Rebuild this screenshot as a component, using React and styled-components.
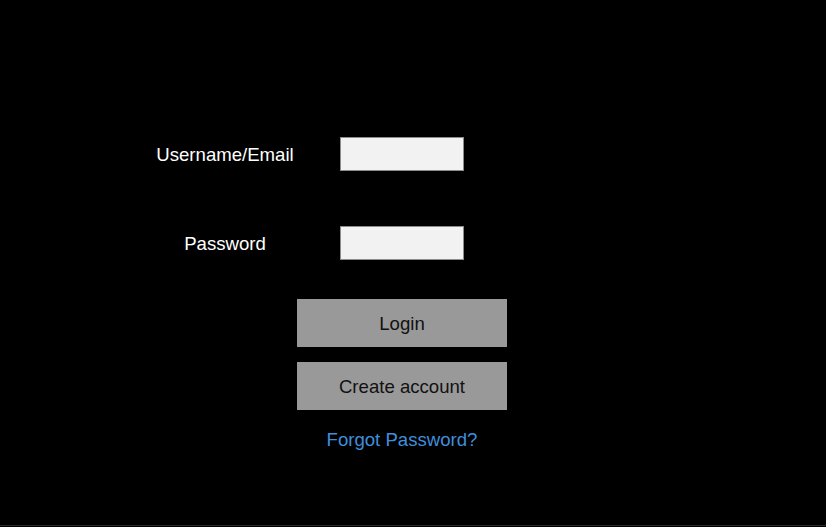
import styled, { createGlobalStyle } from "styled-components";

const GlobalStyle = createGlobalStyle`
  html, body {
    margin: 0;
    padding: 0;
    background: #000;
  }
  body {
    font-family: "Liberation Sans", Arial, sans-serif;
  }
`;

const Page = styled.div`
  width: 826px;
  height: 526px;
  border-bottom: 1px solid #2a2a2a;
  background: #000;
  padding: 137px 0 0 140px;
  box-sizing: border-box;
`;

const Fields = styled.div`
  display: grid;
  grid-template-columns: 170px 124px;
  grid-auto-rows: 34px;
  column-gap: 30px;
  row-gap: 55px;
  align-items: center;
`;

const Label = styled.label`
  color: #fff;
  font-size: 18.6px;
  text-align: center;
  padding-top: 2px;
`;

const Input = styled.input`
  width: 124px;
  height: 34px;
  box-sizing: border-box;
  background: #f2f2f2;
  border: 1px solid #8c8c8c;
  outline: none;
  padding: 0 6px;
  font: inherit;
`;

const Actions = styled.div`
  display: flex;
  flex-direction: column;
  align-items: center;
  gap: 15px;
  width: 210px;
  margin: 39px 0 0 157px;
`;

const Button = styled.button`
  width: 210px;
  height: 48px;
  padding-top: 2px;
  background: #999;
  border: none;
  color: #111;
  font-family: "Liberation Sans", Arial, sans-serif;
  font-size: 18.6px;
  cursor: pointer;
`;

const Link = styled.a`
  margin-top: 5px;
  color: #3f8fdc;
  font-size: 18.6px;
  line-height: 20px;
  text-decoration: none;
  cursor: pointer;
`;

export default function App() {
  return (
    <>
      <GlobalStyle />
      <Page>
        <Fields>
          <Label htmlFor="user">Username/Email</Label>
          <Input id="user" type="text" />
          <Label htmlFor="pass">Password</Label>
          <Input id="pass" type="password" />
        </Fields>
        <Actions>
          <Button>Login</Button>
          <Button>Create account</Button>
          <Link>Forgot Password?</Link>
        </Actions>
      </Page>
    </>
  );
}
